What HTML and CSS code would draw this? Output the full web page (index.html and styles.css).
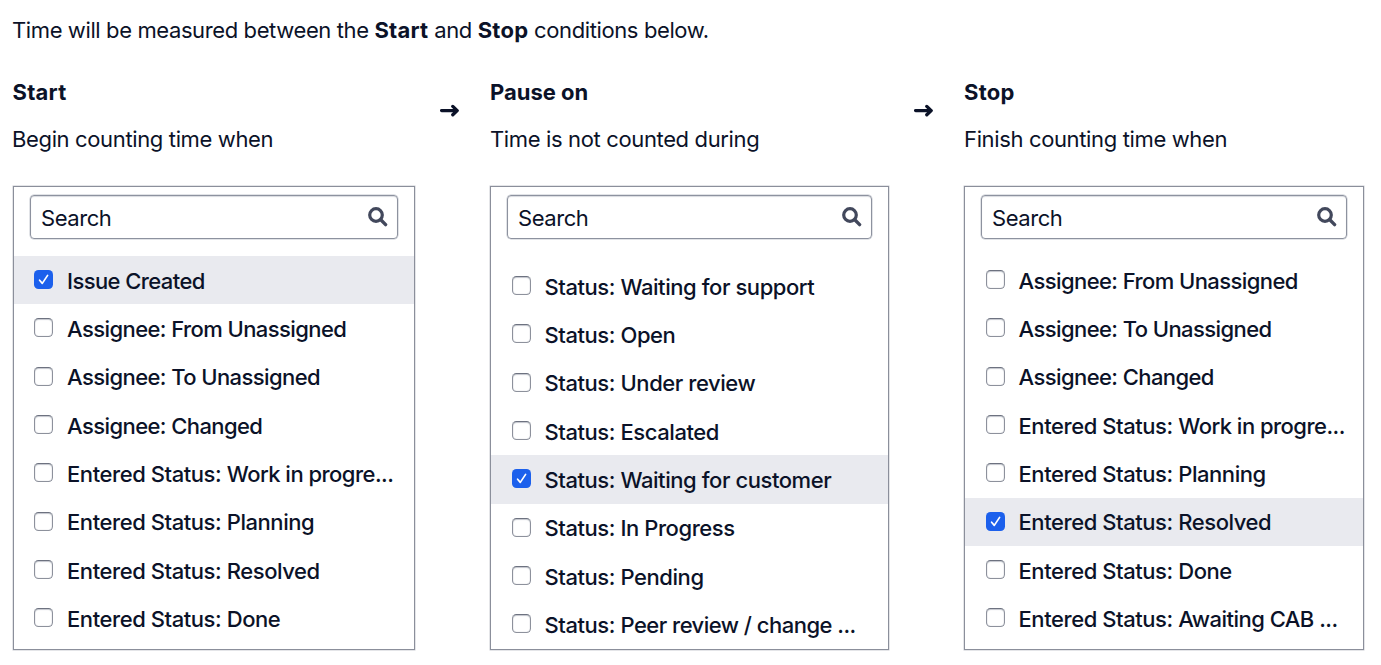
FILE: index.html
```html
<!DOCTYPE html>
<html lang="en">
<head>
<meta charset="utf-8">
<title>Time metric conditions</title>
<link rel="stylesheet" href="styles.css">
</head>
<body>
<svg class="defs" aria-hidden="true">
  <symbol id="search" viewBox="0 0 20 20"><circle cx="8" cy="8" r="6.3" fill="none" stroke="currentColor" stroke-width="3.2"/><path d="M12.8 12.8L17.6 17.6" stroke="currentColor" stroke-width="3.4" stroke-linecap="round"/></symbol>
  <symbol id="arrow" viewBox="0 0 20 14"><path d="M1.6 6.6H17M12.8 2.4L17.2 6.6L12.8 10.8" fill="none" stroke="currentColor" stroke-width="3.3" stroke-linecap="round" stroke-linejoin="round"/></symbol>
  <symbol id="check" viewBox="0 0 19 19"><path d="M5.6 10.2L8.3 13.4L13.6 5.4" fill="none" stroke="#fff" stroke-width="1.7" stroke-linecap="round" stroke-linejoin="round"/></symbol>
</svg>
<main class="page">
  <p class="intro">Time will be measured between the <b>Start</b> and <b>Stop</b> conditions below.</p>
  <div class="columns">
    <section class="column">
      <h2 class="title wide">Start</h2>
      <p class="hint">Begin counting time when</p>
      <div class="panel">
        <div class="search"><span>Search</span><svg class="search-icon"><use href="#search"/></svg></div>
        <ul class="list">
          <li class="row selected"><span class="box checked"><svg class="tick"><use href="#check"/></svg></span><span class="label tight">Issue Created</span></li>
          <li class="row"><span class="box"></span><span class="label tight">Assignee: From Unassigned</span></li>
          <li class="row"><span class="box"></span><span class="label tight">Assignee: To Unassigned</span></li>
          <li class="row"><span class="box"></span><span class="label tight">Assignee: Changed</span></li>
          <li class="row"><span class="box"></span><span class="label">Entered Status: <span class="tail">Work in progre...</span></span></li>
          <li class="row"><span class="box"></span><span class="label">Entered Status: Planning</span></li>
          <li class="row"><span class="box"></span><span class="label">Entered Status: Resolved</span></li>
          <li class="row"><span class="box"></span><span class="label">Entered Status: Done</span></li>
        </ul>
      </div>
    </section>
    <svg class="arrow"><use href="#arrow"/></svg>
    <section class="column inset">
      <h2 class="title">Pause on</h2>
      <p class="hint">Time is not counted during</p>
      <div class="panel">
        <div class="search"><span>Search</span><svg class="search-icon"><use href="#search"/></svg></div>
        <ul class="list spaced">
          <li class="row"><span class="box"></span><span class="label">Status: Waiting for support</span></li>
          <li class="row"><span class="box"></span><span class="label">Status: Open</span></li>
          <li class="row"><span class="box"></span><span class="label">Status: Under review</span></li>
          <li class="row"><span class="box"></span><span class="label">Status: Escalated</span></li>
          <li class="row selected"><span class="box checked"><svg class="tick"><use href="#check"/></svg></span><span class="label">Status: Waiting for customer</span></li>
          <li class="row"><span class="box"></span><span class="label">Status: In Progress</span></li>
          <li class="row"><span class="box"></span><span class="label">Status: Pending</span></li>
          <li class="row"><span class="box"></span><span class="label">Status: <span class="tail">Peer review / change ...</span></span></li>
        </ul>
      </div>
    </section>
    <svg class="arrow"><use href="#arrow"/></svg>
    <section class="column inset">
      <h2 class="title wide">Stop</h2>
      <p class="hint">Finish counting time when</p>
      <div class="panel">
        <div class="search"><span>Search</span><svg class="search-icon"><use href="#search"/></svg></div>
        <ul class="list">
          <li class="row"><span class="box"></span><span class="label tight">Assignee: From Unassigned</span></li>
          <li class="row"><span class="box"></span><span class="label tight">Assignee: To Unassigned</span></li>
          <li class="row"><span class="box"></span><span class="label tight">Assignee: Changed</span></li>
          <li class="row"><span class="box"></span><span class="label">Entered Status: <span class="tail">Work in progre...</span></span></li>
          <li class="row"><span class="box"></span><span class="label">Entered Status: Planning</span></li>
          <li class="row selected"><span class="box checked"><svg class="tick"><use href="#check"/></svg></span><span class="label">Entered Status: Resolved</span></li>
          <li class="row"><span class="box"></span><span class="label">Entered Status: Done</span></li>
          <li class="row"><span class="box"></span><span class="label">Entered Status: <span class="tail">Awaiting CAB ...</span></span></li>
        </ul>
      </div>
    </section>
  </div>
</main>
</body>
</html>
```
FILE: styles.css
```css
* { box-sizing: border-box; }
body {
  margin: 0;
  background: #fff;
  color: #0b1228;
  font: 430 22px/28px Inter, "Liberation Sans", sans-serif;
  letter-spacing: -0.45px;
  overflow: hidden;
}
.defs { display: none; }
.page { width: 1381px; height: 665px; padding: 16px 17px 0 13px; }
.intro { margin: 0 0 34px -1px; white-space: nowrap; letter-spacing: -0.39px; }
.intro b, .title { font-weight: 750; letter-spacing: 0; }
.intro b, .title.wide { letter-spacing: 0.25px; }
.columns { display: grid; grid-template-columns: 402px 75px 399px 75px 400px; }
.title { margin: 0 0 0 -0.5px; font-size: 22px; line-height: 28px; }
.hint { margin: 19px 0 33px -1px; white-space: nowrap; letter-spacing: -0.36px; }
.inset .title, .inset .hint { margin-left: 0; }
.arrow { width: 20px; height: 14px; margin: 26px 0 0 25px; }
.panel { height: 464px; border: 1px solid #8b8f9b; box-shadow: 0 0 0 0.5px #c9cbd1; overflow: hidden; }
.search {
  display: flex;
  align-items: center;
  justify-content: space-between;
  height: 44px;
  margin: 8px 16px 0;
  padding: 1px 9px 0 10px;
  border: 1.5px solid #8d929f;
  border-radius: 4px;
  box-shadow: inset 0 1px 1px #d9dbe0, 0 0 0 0.5px #c4c8d0;
}
.search-icon { width: 20px; height: 20px; margin-bottom: 1px; color: #42485c; }
.list { list-style: none; margin: 0; padding: 17px 0 0; }
.spaced { padding-top: 23px; }
.row { display: flex; align-items: center; height: 48.33px; padding-left: 20px; }
.inset .row { padding-left: 20.5px; }
.selected { background: #e9eaef; }
.box {
  flex: none;
  width: 19px;
  height: 19px;
  margin: 0 14px 1.5px 0;
  border: 1px solid #8d919c;
  border-top-color: #6d7280;
  border-radius: 4.5px;
  background: #fff;
  box-shadow: inset 0 0 1px #a9adb6, inset 0 1px 1px #c6c9d0;
}
.checked { border: 0; background: #1c60ec; box-shadow: none; }
.tick { display: block; width: 19px; height: 19px; }
.label { font-weight: 460; white-space: nowrap; padding-top: 1px; letter-spacing: -0.43px; }
.label.tight { letter-spacing: -0.58px; }
.tail { letter-spacing: -0.52px; }
```
